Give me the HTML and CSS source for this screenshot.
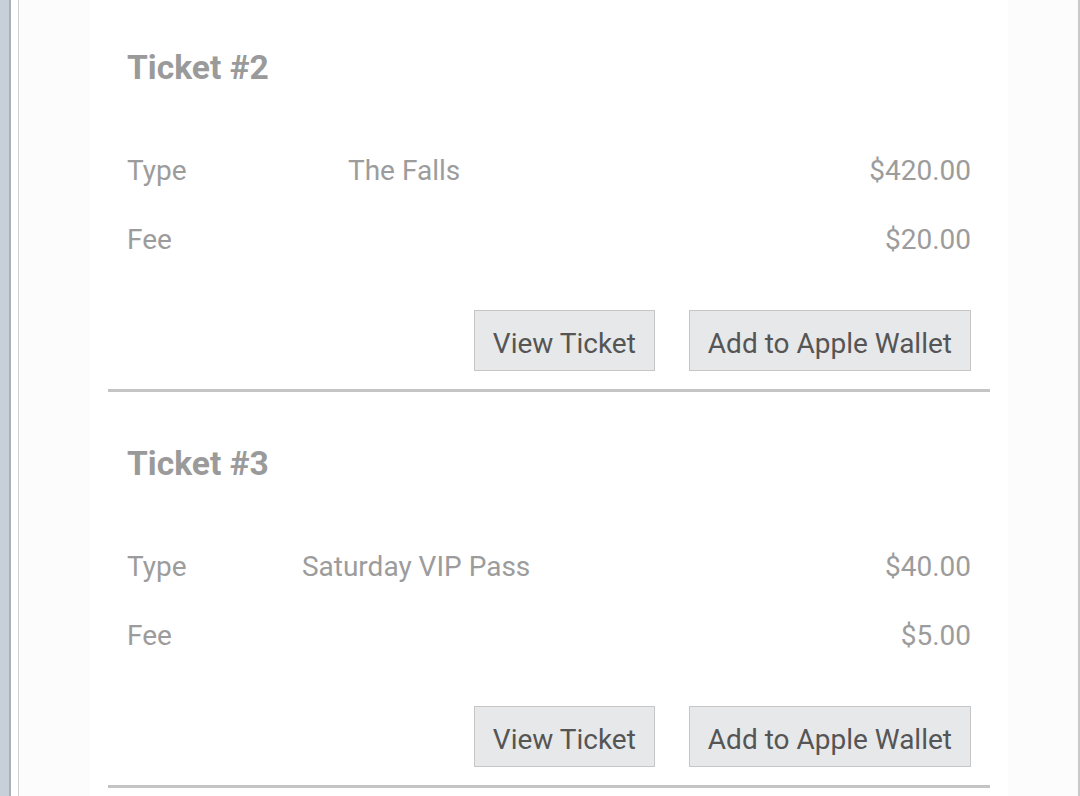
FILE: index.html
```html
<!DOCTYPE html>
<html>
<head>
<meta charset="utf-8">
<link rel="stylesheet" href="styles.css">
</head>
<body>
<div class="frame">
  <div class="rail"></div>
  <div class="page">
    <div class="card">
      <section class="ticket">
        <h2 class="ticket-title">Ticket #2</h2>
        <table class="ticket-table">
          <tr><td class="lbl">Type</td><td class="desc">The Falls</td><td class="amt">$420.00</td></tr>
          <tr><td class="lbl">Fee</td><td class="desc"></td><td class="amt">$20.00</td></tr>
        </table>
        <div class="actions">
          <button class="btn">View Ticket</button>
          <button class="btn">Add to Apple Wallet</button>
        </div>
      </section>
      <section class="ticket">
        <h2 class="ticket-title">Ticket #3</h2>
        <table class="ticket-table">
          <tr><td class="lbl">Type</td><td class="desc">Saturday VIP Pass</td><td class="amt">$40.00</td></tr>
          <tr><td class="lbl">Fee</td><td class="desc"></td><td class="amt">$5.00</td></tr>
        </table>
        <div class="actions">
          <button class="btn">View Ticket</button>
          <button class="btn">Add to Apple Wallet</button>
        </div>
      </section>
    </div>
  </div>
</div>
</body>
</html>
```
FILE: styles.css
```css
html, body {
  margin: 0;
  padding: 0;
  height: 100%;
  overflow: hidden;
  background: #ffffff;
  font-family: Roboto, "Liberation Sans", sans-serif;
}
.frame {
  display: flex;
  height: 796px;
}
.rail {
  width: 9px;
  flex: none;
  background: #c7cfd9;
  border-right: 2px solid #a9b0b8;
}
.page {
  flex: 1;
  margin-left: 7px;
  border-left: 1px solid #cfcfcf;
  border-right: 2px solid #c9c9c9;
  background: #fcfcfc;
  padding: 0 70px 0 71px;
}
.card {
  background: #ffffff;
  padding: 0 18px;
  height: 100%;
}
.ticket {
  padding: 52px 0 18px;
  border-bottom: 3px solid #c4c4c4;
}
.ticket:first-child {
  padding-top: 48px;
}
.ticket-title {
  margin: 0 0 48px;
  padding: 0 19px;
  font-size: 33.6px;
  line-height: 40px;
  font-weight: 700;
  color: #9a9a9a;
}
.ticket-table {
  width: 100%;
  border-collapse: collapse;
}
.ticket-table td {
  padding: 18px 18px;
  font-size: 28px;
  line-height: 33px;
  color: #9c9c9c;
  white-space: nowrap;
}
.ticket-table td.lbl {
  padding-left: 19px;
}
.ticket-table td.amt {
  text-align: right;
  padding-right: 19px;
}
.actions {
  display: flex;
  justify-content: flex-end;
  gap: 34px;
  margin-top: 36px;
  padding-right: 19px;
}
.btn {
  height: 61px;
  padding: 6px 18px 0;
  border: 1px solid #c6c6c6;
  background: #e7e8ea;
  font-family: Roboto, "Liberation Sans", sans-serif;
  font-size: 28px;
  color: #555555;
  border-radius: 0;
}
```
